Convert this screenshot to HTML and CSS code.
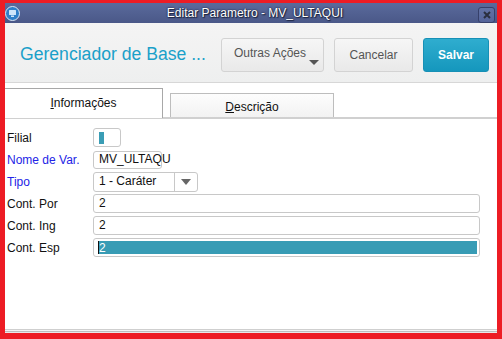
FILE: index.html
```html
<!DOCTYPE html>
<html lang="pt-BR">
<head>
  <meta charset="UTF-8" />
  <title>Editar Parametro - MV_ULTAQUI</title>
  <link rel="stylesheet" href="styles.css">
</head>
<body>

  <div class="window">

    <!-- barra de titulo -->
    <div class="titlebar">
      <span class="app-icon">
        <svg width="15" height="15" viewBox="0 0 15 15">
          <circle cx="7.5" cy="7.5" r="7" fill="#2f7fc8" stroke="#dfe8f4" stroke-width="1"/>
          <rect x="4" y="4" width="7" height="5" fill="#cfe6fa" rx="0.5"/>
          <rect x="6" y="9.5" width="3" height="1.5" fill="#cfe6fa"/>
        </svg>
      </span>
      <span class="title-text">Editar Parametro - MV_ULTAQUI</span>
      <span class="close-btn">
        <svg width="8" height="8" viewBox="0 0 8 8">
          <path d="M1 1 L7 7 M7 1 L1 7" stroke="#2a2f3f" stroke-width="2"/>
        </svg>
      </span>
    </div>

    <!-- cabecalho com acoes -->
    <div class="header">
      <div class="page-title">Gerenciador de Base ...</div>
      <div class="actions">
        <button class="btn btn-more">Outras Ações<span class="caret"></span></button>
        <button class="btn">Cancelar</button>
        <button class="btn btn-primary">Salvar</button>
      </div>
    </div>

    <!-- abas -->
    <div class="tabs">
      <div class="tab active"><u>I</u>nformações</div>
      <div class="tab"><u>D</u>escrição</div>
    </div>

    <!-- formulario -->
    <div class="form">
      <label class="lbl">Filial</label>
      <div class="field w-filial"><span class="cursor-block"></span></div>

      <label class="lbl blue">Nome de Var.</label>
      <div class="field w-nome">MV_ULTAQU</div>

      <label class="lbl blue">Tipo</label>
      <div class="field select w-tipo">
        <span class="select-val">1 - Caráter</span>
        <span class="select-btn"><span class="caret"></span></span>
      </div>

      <label class="lbl">Cont. Por</label>
      <div class="field w-full">2</div>

      <label class="lbl">Cont. Ing</label>
      <div class="field w-full">2</div>

      <label class="lbl">Cont. Esp</label>
      <div class="field w-full selected"><span class="sel-text">2</span></div>
    </div>

    <div class="footer"></div>
  </div>

</body>
</html>
```

FILE: styles.css
```css
body {
  margin: 0;
  background-color: #ed1c24;
  padding: 3px 5px 6px 5px;
  font-family: "Liberation Sans", Arial, sans-serif;
}

.window {
  height: 330px;
  background: #fff;
  display: flex;
  flex-direction: column;
}

/* titulo */
.titlebar {
  height: 20px;
  background: linear-gradient(#5a6a9c, #4a5888);
  display: flex;
  align-items: center;
  position: relative;
}

.app-icon {
  width: 15px;
  height: 15px;
  margin-left: 0;
  display: flex;
}

.title-text {
  flex: 1;
  text-align: center;
  color: #fff;
  font-size: 12px;
  text-shadow: 0 0 2px #1c2440, 1px 1px 1px #1c2440, 0 0 1px #1c2440;
  margin-left: 12px;
}

.close-btn {
  width: 15px;
  height: 14px;
  border: 1px solid #36406a;
  border-radius: 3px;
  margin-right: 2px;
  margin-top: 3px;
  display: flex;
  align-items: center;
  justify-content: center;
  background: linear-gradient(#6272a4, #55649a);
}

/* cabecalho */
.header {
  height: 60px;
  background: linear-gradient(#f4f4f4, #eeefef);
  border-bottom: 1px solid #d7d7d7;
  display: flex;
  align-items: center;
  box-sizing: border-box;
}

.page-title {
  flex: 1;
  padding-left: 15px;
  color: #1aa0c9;
  font-size: 17.6px;
  margin-top: 4px;
}

.actions {
  display: flex;
  gap: 10px;
  margin-right: 8px;
  margin-top: 4px;
}

.btn {
  height: 34px;
  border: 1px solid #d3d3d3;
  border-radius: 3px;
  background: linear-gradient(#f6f6f6, #e9e9e9);
  color: #555;
  font-family: "Liberation Sans", Arial, sans-serif;
  font-size: 12px;
  padding: 0;
  width: 79px;
}

.btn-more {
  width: 103px;
  text-align: left;
  padding-left: 12px;
  padding-bottom: 4px;
  position: relative;
}

.btn-more .caret {
  position: absolute;
  right: 4px;
  bottom: 6px;
}

.caret {
  display: inline-block;
  width: 0;
  height: 0;
  border-left: 5px solid transparent;
  border-right: 5px solid transparent;
  border-top: 5px solid #555;
}

.btn-primary {
  width: 66px;
  background: linear-gradient(#2fadcf, #1597bd);
  border-color: #1790b6;
  color: #fff;
  font-weight: bold;
}

/* abas */
.tabs {
  display: flex;
  align-items: flex-end;
  height: 36px;
  border-bottom: 2px solid #d0d0d0;
  box-sizing: border-box;
  gap: 7px;
}

.tab {
  width: 157px;
  height: 24px;
  border: 1px solid #bdbdbd;
  border-bottom: none;
  background: linear-gradient(#fdfdfd, #f2f2f2);
  font-size: 12px;
  color: #111;
  text-align: center;
  line-height: 26px;
  box-sizing: border-box;
}

.tab.active {
  width: 158px;
  height: 30px;
  background: #fff;
  border-left: none;
  border-color: #a8a8a8;
  line-height: 28px;
  margin-bottom: -1px;
}

.tab:last-child {
  width: 164px;
}

/* formulario */
.form {
  flex: 1;
  display: grid;
  grid-template-columns: 86px auto;
  grid-auto-rows: 19px;
  row-gap: 3px;
  padding: 9px 0 0 2px;
  justify-items: start;
  align-items: center;
}

.lbl {
  font-size: 12px;
  color: #111;
}

.lbl.blue {
  color: #2323e6;
}

.field {
  height: 19px;
  border: 1px solid #c8c8c8;
  border-radius: 3px;
  box-sizing: border-box;
  font-size: 12px;
  color: #111;
  padding-left: 5px;
  line-height: 17px;
  display: flex;
  align-items: center;
}

.w-filial { width: 28px; }
.w-nome { width: 69px; height: 18px; }
.w-tipo { width: 105px; height: 20px; padding: 0; }
.w-full { width: 387px; }

.cursor-block {
  width: 5px;
  height: 12px;
  background: #3a9db5;
}

.select-val {
  flex: 1;
  padding-left: 5px;
}

.select-btn {
  width: 22px;
  height: 100%;
  border-left: 1px solid #c8c8c8;
  display: flex;
  align-items: center;
  justify-content: center;
}

.select-btn .caret {
  border-top-color: #666;
  border-left-width: 5px;
  border-right-width: 5px;
  border-top-width: 6px;
}

.selected {
  padding: 2px 2px 2px 4px;
}

.sel-text {
  flex: 1;
  height: 100%;
  background: #389cb5;
  color: #fff;
  border-left: 1px solid #111;
  line-height: 15px;
}

.footer {
  height: 4px;
  background: linear-gradient(#cfcfcf 0 1px, #f4f4f4 1px 2px, #bdbdbd 2px 3px, #e8e8e8 3px);
}
```
